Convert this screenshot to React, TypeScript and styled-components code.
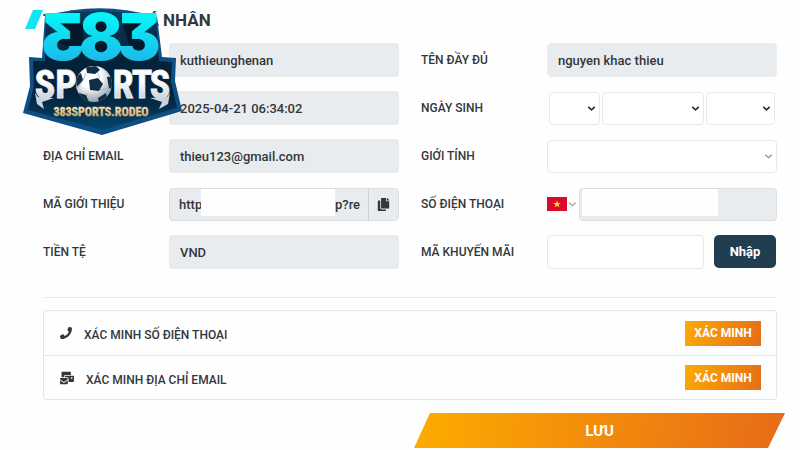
import React from "react";
import styled, { createGlobalStyle } from "styled-components";
import { FaCopy, FaMailBulk, FaPhone } from "react-icons/fa";

const GlobalStyle = createGlobalStyle`
  *, *::before, *::after { box-sizing: border-box; }
  body {
    margin: 0;
    background: #fefefe;
    color: #33373b;
    font-family: Roboto, "Liberation Sans", sans-serif;
  }
  button, input, select { font: inherit; color: inherit; }
`;

const Page = styled.main`
  position: relative;
  padding: 8px 15px 0 43px;
`;

const Heading = styled.h1`
  margin: 0 0 11px;
  font-size: 17px;
  line-height: 24px;
  font-weight: 700;
`;

const Content = styled.div`
  margin-right: 8px;
`;

const Fields = styled.div`
  display: grid;
  grid-template-columns: 1fr 1fr;
  gap: 14px 22px;
`;

const FieldRow = styled.div`
  display: grid;
  grid-template-columns: 126px minmax(0, 1fr);
  align-items: center;
  height: 34px;
`;

const Label = styled.label`
  font-size: 12px;
  line-height: 16px;
  font-weight: 500;
  white-space: nowrap;
`;

const TextInput = styled.input`
  width: 100%;
  min-width: 0;
  height: 34px;
  padding: 0 10px;
  border: 1px solid #e6e8ea;
  border-radius: 4px;
  background: #ffffff;
  font-size: 13px;
  font-weight: 500;
  outline: none;

  &:read-only {
    background: #e9ecee;
    border-color: #e9ecee;
  }
`;

const InputGroup = styled.div`
  display: flex;
  flex: 1;
  min-width: 0;
  height: 33px;
  overflow: hidden;
  border: 1px solid #dcdee0;
  border-radius: 4px;
  background: #e9ecee;
  font-size: 13px;
  font-weight: 500;
`;

const BareInput = styled.input<{ $width: number }>`
  width: ${(p) => p.$width}px;
  padding: 0 0 0 ${(p) => (p.$width > 10 ? 9 : 0)}px;
  border: 0;
  background: transparent;
  outline: none;
`;

const Redaction = styled.span<{ $width: number }>`
  flex: 0 1 ${(p) => p.$width}px;
  height: 28px;
  margin-top: -1px;
  background: #fefefe;
`;

const Suffix = styled.span`
  flex: 1;
  line-height: 31px;
`;

const CopyButton = styled.button`
  display: grid;
  place-items: center;
  width: 30px;
  padding: 0;
  border: 0;
  border-left: 1px solid #ced1d4;
  background: #e9ecee;
  cursor: pointer;
`;

const DateGroup = styled.div`
  display: grid;
  grid-template-columns: 51fr 102fr 69fr;
  gap: 2px;
  padding: 0 2px;
`;

const SelectBox = styled.span<{ $muted?: boolean }>`
  display: grid;
  align-items: center;
  color: ${(p) => (p.$muted ? "#8d9195" : "#303336")};

  > * { grid-area: 1 / 1; }
  > svg { justify-self: end; margin-right: 4px; pointer-events: none; }
`;

const Select = styled.select`
  appearance: none;
  width: 100%;
  height: 33px;
  padding: 0 16px 0 8px;
  border: 1px solid #e6e8ea;
  border-radius: 4px;
  background: #ffffff;
  font-size: 13px;
`;

const PhoneGroup = styled.div`
  display: flex;
  align-items: center;
`;

const CountryButton = styled.button`
  display: flex;
  align-items: center;
  gap: 1px;
  width: 32px;
  padding: 0;
  border: 0;
  background: transparent;
  color: #a3a6a9;
`;

const PromoGroup = styled.div`
  display: flex;
  gap: 10px;
`;

const PromoButton = styled.button`
  flex: none;
  width: 62px;
  height: 33px;
  margin-right: 1px;
  padding: 0;
  border: 0;
  border-radius: 5px;
  background: #213d50;
  color: #ffffff;
  font-size: 13px;
  font-weight: 700;
`;

const Divider = styled.hr`
  height: 1px;
  margin: 28px 0 12px;
  border: 0;
  background: #e8eaeb;
`;

const VerifyList = styled.ul`
  margin: 0 0 13px;
  padding: 0;
  border: 1px solid #e3e5e7;
  border-radius: 3px;
  list-style: none;
`;

const VerifyRow = styled.li`
  display: flex;
  align-items: center;
  gap: 12px;
  height: 44px;
  padding: 0 15px 0 16px;
  font-size: 12px;
  font-weight: 500;

  & + & { border-top: 1px solid #e3e5e7; }
  > svg { flex: none; }
`;

const VerifyText = styled.span`
  flex: 1;
  padding-top: 4px;
`;

const VerifyButton = styled.button`
  width: 76px;
  height: 25px;
  padding: 0;
  border: 0;
  background: linear-gradient(105deg, #fcaa04, #e66d17);
  color: #ffffff;
  font-size: 12px;
  font-weight: 700;
`;

const SaveButton = styled.button`
  display: block;
  width: 50%;
  height: 35px;
  margin-left: auto;
  padding: 0;
  border: 0;
  background: linear-gradient(100deg, #feac00, #e66b18);
  clip-path: polygon(16px 0, 100% 0, calc(100% - 17px) 100%, 0 100%);
  color: #ffffff;
  font-size: 15px;
  font-weight: 700;
`;

const LogoLink = styled.a`
  position: absolute;
  top: 5px;
  left: 20px;
`;

const LogoArt = styled.svg`
  display: block;
  overflow: visible;

  text { text-anchor: middle; }
  .digits {
    font: 900 65px Inter, sans-serif;
    font-feature-settings: "cv09" 1;
  }
  .word { font: 700 38px "Roboto Condensed", "Liberation Sans Narrow", sans-serif; }
  .site { font: 700 12px "Roboto Condensed", "Liberation Sans Narrow", sans-serif; }
`;

function Chevron({ thin }: { thin?: boolean }) {
  return (
    <svg width="9" height="7" viewBox="0 0 9 7" fill="none" stroke="currentColor" strokeWidth={thin ? 1.2 : 1.8} aria-hidden="true">
      <path d="M1.3 1.8 4.5 4.8 7.7 1.8" />
    </svg>
  );
}

function VietnamFlag() {
  return (
    <svg width="20" height="14" viewBox="0 0 20 14" aria-hidden="true">
      <rect width="20" height="14" fill="#d80b2c" />
      <path fill="#ffd83b" d="m10 3.3.9 2.7h2.9l-2.3 1.7.9 2.8-2.4-1.7-2.4 1.7.9-2.8L6.2 6h2.9z" />
    </svg>
  );
}

function Logo() {
  return (
    <LogoArt width="165" height="132" viewBox="20 5 165 132" role="img" aria-label="383 Sports">
      <defs>
        <linearGradient id="cyan" gradientUnits="userSpaceOnUse" x1="0" x2="0" y1="12" y2="62">
          <stop offset="0.1" stopColor="#08f3f6" />
          <stop offset="1" stopColor="#1cb9e9" />
        </linearGradient>
        <linearGradient id="cyanFlipped" gradientUnits="userSpaceOnUse" x1="0" x2="0" y1="-49" y2="1">
          <stop offset="0.1" stopColor="#08f3f6" />
          <stop offset="1" stopColor="#1cb9e9" />
        </linearGradient>
        <linearGradient id="navy" x2="0" y2="1">
          <stop offset="0" stopColor="#0a3a5c" />
          <stop offset="0.4" stopColor="#04233a" />
          <stop offset="0.7" stopColor="#04233a" />
          <stop offset="1" stopColor="#05456c" />
        </linearGradient>
        <linearGradient id="silver" gradientUnits="userSpaceOnUse" x1="0" x2="0" y1="70" y2="108">
          <stop offset="0.3" stopColor="#ffffff" />
          <stop offset="1" stopColor="#a9b8c5" />
        </linearGradient>
        <linearGradient id="gold" x2="0" y2="1">
          <stop offset="0.2" stopColor="#fff3c9" />
          <stop offset="0.9" stopColor="#b98b43" />
        </linearGradient>
        <radialGradient id="ball" cx="0.4" cy="0.3" r="0.75">
          <stop offset="0.4" stopColor="#ffffff" />
          <stop offset="1" stopColor="#8396a5" />
        </radialGradient>
        <clipPath id="ballClip"><circle cx="94" cy="84" r="18" /></clipPath>
      </defs>
      <path fill="#0e4f83" d="M45 16Q101 0 157 17L162 57 176 58 175 81 182 111 102 135 23 113 30 86 29 57 42 58Z" />
      <path fill="url(#navy)" d="M46 17Q101 4 156 19L159 61 172 62 171 82 177 108 102 130 28 110 34 86 33 61 45 61Z" />
      <path fill="#10e5f0" d="M33 10H43L35 29H25Z" />
      <path fill="#031a2d" d="M58 28 70 20 83 25V45L70 48 58 42ZM95 22H113V52H95ZM122 22 144 20 136 30 152 34 146 50 130 48Z" />
      <g fill="url(#cyan)">
        <text className="digits" transform="translate(63 60) scale(-1 1)" fill="url(#cyanFlipped)">3</text>
        <text className="digits" x="101" y="60">8</text>
        <text className="digits" x="139" y="60">3</text>
      </g>
      <g fill="url(#silver)" stroke="#eef2f5" strokeWidth="0.8">
        <text className="word" x="45" y="98">S</text>
        <text className="word" x="66" y="98">P</text>
        <text className="word" x="123" y="98">R</text>
        <text className="word" x="142" y="98">T</text>
        <text className="word" x="160" y="98">S</text>
      </g>
      <path fill="#cbd4dc" d="M35 93 37 104 44 109 42 102 54 98 38 97ZM170 93 168 104 159 109 162 102 150 98 167 97Z" />
      <circle cx="94" cy="84" r="18" fill="url(#ball)" />
      <g clipPath="url(#ballClip)">
        <path fill="none" stroke="#9cabb7" strokeWidth="0.8" d="M86 73 83 80M97 72 100 78M109 88 100 90M88 93 86 98M83 80 78 88" />
        <path fill="#102e45" d="M86 67 96 66 100 70 95 74 87 73ZM75 78 81 73 83 80 77 87ZM89 80 98 78 103 84 99 91 90 90ZM107 77 113 76 114 90 109 88ZM79 93 86 95 89 102 80 100ZM98 98 106 93 107 99 99 103Z" />
      </g>
      <text className="site" x="101" y="116" fill="url(#gold)" stroke="#e2c184" strokeWidth="0.4">383SPORTS.RODEO</text>
    </LogoArt>
  );
}

function ReadOnlyField({ id, label, value, labelHidden }: { id: string; label: string; value: string; labelHidden?: boolean }) {
  return (
    <FieldRow>
      {labelHidden ? <span /> : <Label htmlFor={id}>{label}</Label>}
      <TextInput id={id} aria-label={label} value={value} readOnly />
    </FieldRow>
  );
}

function DateSelect({ id, label }: { id?: string; label: string }) {
  return (
    <SelectBox>
      <Select id={id} aria-label={label} />
      <Chevron />
    </SelectBox>
  );
}

export default function App() {
  return (
    <>
      <GlobalStyle />
      <Page>
        <Heading>THÔNG TIN CÁ NHÂN</Heading>
        <Content>
          <Fields>
            <ReadOnlyField id="username" label="Tên đăng nhập" value="kuthieunghenan" labelHidden />
            <ReadOnlyField id="fullname" label="TÊN ĐẦY ĐỦ" value="nguyen khac thieu" />
            <ReadOnlyField id="joined" label="Ngày tham gia" value="2025-04-21 06:34:02" labelHidden />
            <FieldRow>
              <Label htmlFor="day">NGÀY SINH</Label>
              <DateGroup>
                <DateSelect id="day" label="Ngày" />
                <DateSelect label="Tháng" />
                <DateSelect label="Năm" />
              </DateGroup>
            </FieldRow>
            <ReadOnlyField id="email" label="ĐỊA CHỈ EMAIL" value="thieu123@gmail.com" />
            <FieldRow>
              <Label htmlFor="gender">GIỚI TÍNH</Label>
              <SelectBox $muted>
                <Select id="gender" />
                <Chevron thin />
              </SelectBox>
            </FieldRow>
            <FieldRow>
              <Label htmlFor="referral">MÃ GIỚI THIỆU</Label>
              <InputGroup>
                <BareInput id="referral" $width={31} value="http" readOnly />
                <Redaction $width={134} />
                <Suffix>p?re</Suffix>
                <CopyButton type="button" aria-label="Sao chép"><FaCopy size={13} /></CopyButton>
              </InputGroup>
            </FieldRow>
            <FieldRow>
              <Label htmlFor="phone">SỐ ĐIỆN THOẠI</Label>
              <PhoneGroup>
                <CountryButton type="button" aria-label="Việt Nam">
                  <VietnamFlag />
                  <Chevron thin />
                </CountryButton>
                <InputGroup>
                  <BareInput id="phone" $width={2} defaultValue="" />
                  <Redaction $width={136} />
                </InputGroup>
              </PhoneGroup>
            </FieldRow>
            <ReadOnlyField id="currency" label="TIỀN TỆ" value="VND" />
            <FieldRow>
              <Label htmlFor="promo">MÃ KHUYẾN MÃI</Label>
              <PromoGroup>
                <TextInput id="promo" />
                <PromoButton type="button">Nhập</PromoButton>
              </PromoGroup>
            </FieldRow>
          </Fields>
          <Divider />
          <VerifyList>
            <VerifyRow>
              <FaPhone size={12} />
              <VerifyText>XÁC MINH SỐ ĐIỆN THOẠI</VerifyText>
              <VerifyButton type="button">XÁC MINH</VerifyButton>
            </VerifyRow>
            <VerifyRow>
              <FaMailBulk size={14} />
              <VerifyText>XÁC MINH ĐỊA CHỈ EMAIL</VerifyText>
              <VerifyButton type="button">XÁC MINH</VerifyButton>
            </VerifyRow>
          </VerifyList>
        </Content>
        <SaveButton type="button">LƯU</SaveButton>
        <LogoLink href="#"><Logo /></LogoLink>
      </Page>
    </>
  );
}
